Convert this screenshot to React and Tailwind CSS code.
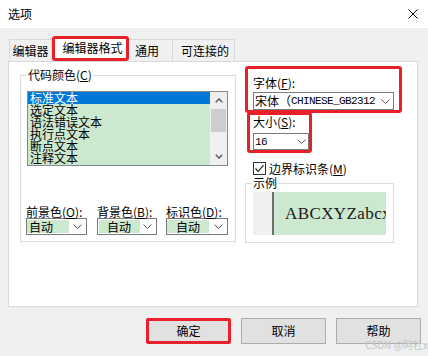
const Chevron = ({ className = "" }) => (
  <svg width="9" height="5" viewBox="0 0 9 5" className={className}>
    <polyline points="0.5,0.5 4.5,4.5 8.5,0.5" fill="none" stroke="#5a5a5a" strokeWidth="1" />
  </svg>
);

const ScrollArrow = ({ up }) => (
  <svg width="8" height="5" viewBox="0 0 8 5">
    <polyline
      points={up ? "0.8,4.2 4,1 7.2,4.2" : "0.8,0.8 4,4 7.2,0.8"}
      fill="none"
      stroke="#606060"
      strokeWidth="1.6"
    />
  </svg>
);

const Mono = ({ children }) => (
  <span className="font-['Liberation_Mono',monospace] text-[11px] tracking-[-0.6px]">{children}</span>
);

function ColorCol({ label, letter, wrap, greenCls }) {
  return (
    <div className={wrap}>
      <div className="leading-[13px] h-[13px] whitespace-nowrap">
        {label}(<span className="underline">{letter}</span>):
      </div>
      <div className="h-[17px] border border-[#7a7a7a] bg-white flex items-center py-[1px]">
        <div className={greenCls}>自动</div>
        <Chevron className="ml-auto mr-[4px]" />
      </div>
    </div>
  );
}

export default function App() {
  const items = ["标准文本", "选定文本", "语法错误文本", "执行点文本", "断点文本", "注释文本"];
  return (
    <div className="relative w-[428px] h-[356px] overflow-hidden bg-[#f0f0f0] font-['Noto_Sans_CJK_SC',sans-serif] text-[12px] leading-[14px] text-black">
      {/* Title bar */}
      <div className="h-[28px] bg-white flex items-center justify-between pl-[8px] pr-[10px]">
        <span>选项</span>
        <svg width="10" height="10" viewBox="0 0 10 10">
          <path d="M0.5 0.5L9.5 9.5M9.5 0.5L0.5 9.5" stroke="#000" strokeWidth="1" />
        </svg>
      </div>

      {/* Tabs */}
      <div className="mt-[8px] pl-[9px] h-[25px] flex items-end">
        <div className="w-[43px] h-[22px] border border-b-0 border-[#d9d9d9] bg-[#f0f0f0] flex items-center justify-center whitespace-nowrap pt-[1px]">
          编辑器
        </div>
        <div className="w-[77px] h-[25px] border-[3px] border-[#e8202a] rounded-[3px] bg-white flex items-center justify-center whitespace-nowrap pl-[4px] pb-[2px]">
          编辑器格式
        </div>
        <div className="w-[44px] h-[22px] border border-b-0 border-l-0 border-[#d9d9d9] bg-[#f0f0f0] flex items-center whitespace-nowrap pl-[6px] pt-[1px]">
          通用
        </div>
        <div className="w-[62px] h-[22px] border border-b-0 border-l-0 border-[#d9d9d9] bg-[#f0f0f0] flex items-center whitespace-nowrap pl-[8px] pt-[1px]">
          可连接的
        </div>
      </div>

      {/* Panel */}
      <div className="ml-[8px] w-[410px] h-[246px] bg-white border border-[#d9d9d9] flex items-start pl-[11px]">
        {/* Left group: 代码颜色 */}
        <div className="relative mt-[13px] w-[216px] h-[167px] border border-[#dcdcdc] pt-[15px] pl-[6px]">
          <div className="absolute left-[6px] -top-[8px] bg-white px-[1px] whitespace-nowrap">
            代码颜色(<span className="underline">C</span>)
          </div>
          <div className="w-[201px] h-[75px] border border-[#828790] flex">
            <div className="flex-1 bg-[#cce8cf] flex flex-col">
              {items.map((t, i) => (
                <div
                  key={t}
                  className={
                    i === 0
                      ? "h-[12px] leading-[12px] pl-[2px] whitespace-nowrap bg-[#0078d7] text-white"
                      : "h-[12px] leading-[12px] pl-[2px] whitespace-nowrap"
                  }
                >
                  {t}
                </div>
              ))}
            </div>
            <div className="w-[17px] bg-[#f0f0f0] flex flex-col items-center">
              <div className="h-[17px] flex items-center justify-center">
                <ScrollArrow up />
              </div>
              <div className="w-[15px] h-[23px] bg-[#cdcdcd]" />
              <div className="flex-1" />
              <div className="h-[17px] flex items-center justify-center">
                <ScrollArrow />
              </div>
            </div>
          </div>

          <div className="mt-[39px] -ml-[1px] flex">
            <ColorCol label="前景色" letter="O" wrap="w-[61px]" greenCls="w-[42px] h-full bg-[#cce8cf] pl-[2px] leading-[13px]" />
            <ColorCol label="背景色" letter="B" wrap="ml-[10px] w-[60px]" greenCls="w-[41px] h-full bg-[#cce8cf] pl-[8px] leading-[13px] ml-[1px]" />
            <ColorCol label="标识色" letter="D" wrap="ml-[9px] w-[62px]" greenCls="w-[42px] h-full bg-[#cce8cf] pl-[9px] leading-[13px]" />
          </div>
        </div>

        {/* Right column */}
        <div className="ml-[9px] mt-[4px] w-[157px] flex flex-col">
          <div className="h-[47px] border-[3px] border-[#e8202a] rounded-[3px] pl-[5px] pt-[7px] flex flex-col">
            <div className="h-[14px] leading-[14px] whitespace-nowrap">
              字体(<span className="underline">F</span>):
            </div>
            <div className="mt-[2px] w-[141px] h-[18px] border border-[#7a7a7a] bg-white flex items-center pl-[1px] whitespace-nowrap">
              <span>宋体（</span>
              <Mono>CHINESE_GB2312</Mono>
              <Chevron className="ml-auto mr-[3px]" />
            </div>
          </div>
          <div className="-mt-[1px] ml-[2px] w-[65px] h-[41px] border-[3px] border-[#e8202a] rounded-[3px] pl-[3px] flex flex-col">
            <div className="h-[14px] leading-[14px] whitespace-nowrap">
              大小(<span className="underline">S</span>):
            </div>
            <div className="mt-[4px] w-[56px] h-[17px] border border-[#7a7a7a] bg-white flex items-center pl-[1px]">
              <Mono>16</Mono>
              <Chevron className="ml-auto mr-[2px]" />
            </div>
          </div>
          <div className="mt-[9px] ml-[8px] h-[13px] flex items-center gap-[3px] whitespace-nowrap">
            <div className="w-[13px] h-[13px] border border-[#333333] bg-white flex items-center justify-center">
              <svg width="11" height="11" viewBox="0 0 11 11">
                <polyline points="1.5,5.5 4.2,8.3 9.5,2.2" fill="none" stroke="#222" strokeWidth="1.2" />
              </svg>
            </div>
            <span>
              边界标识条(<span className="underline">M</span>)
            </span>
          </div>
          <div className="relative mt-[8px] w-[149px] h-[60px] border border-[#dcdcdc] pl-[7px] pt-[8px]">
            <div className="absolute left-[6px] -top-[8px] bg-white px-[1px]">示例</div>
            <div className="w-[133px] h-[43px] flex overflow-hidden">
              <div className="w-[21px] bg-[#f0f0f0] border-r-2 border-[#6d6d6d]" />
              <div className="flex-1 bg-[#cce8cf] flex items-center pl-[11px] whitespace-nowrap overflow-hidden font-['Liberation_Serif',serif] text-[17px] tracking-[0.4px] text-[#1a1a1a]">
                ABCXYZabcxyz
              </div>
            </div>
          </div>
        </div>
      </div>

      {/* Buttons */}
      <div className="mt-[11px] pr-[7px] flex justify-end gap-[10px]">
        <div className="w-[85px] h-[26px] border-[3px] border-[#e8202a] rounded-[2px] bg-[#e1e1e1] flex items-center justify-center">
          确定
        </div>
        <div className="w-[85px] h-[26px] border border-[#adadad] bg-[#e1e1e1] flex items-center justify-center">
          取消
        </div>
        <div className="w-[85px] h-[26px] border border-[#adadad] bg-[#e1e1e1] flex items-center justify-center">
          帮助
        </div>
      </div>

      <div className="absolute right-[0px] bottom-[5px] text-[10px] leading-[12px] text-[#c4c4c4] whitespace-nowrap">
        CSDN @阿杜x
      </div>
    </div>
  );
}
